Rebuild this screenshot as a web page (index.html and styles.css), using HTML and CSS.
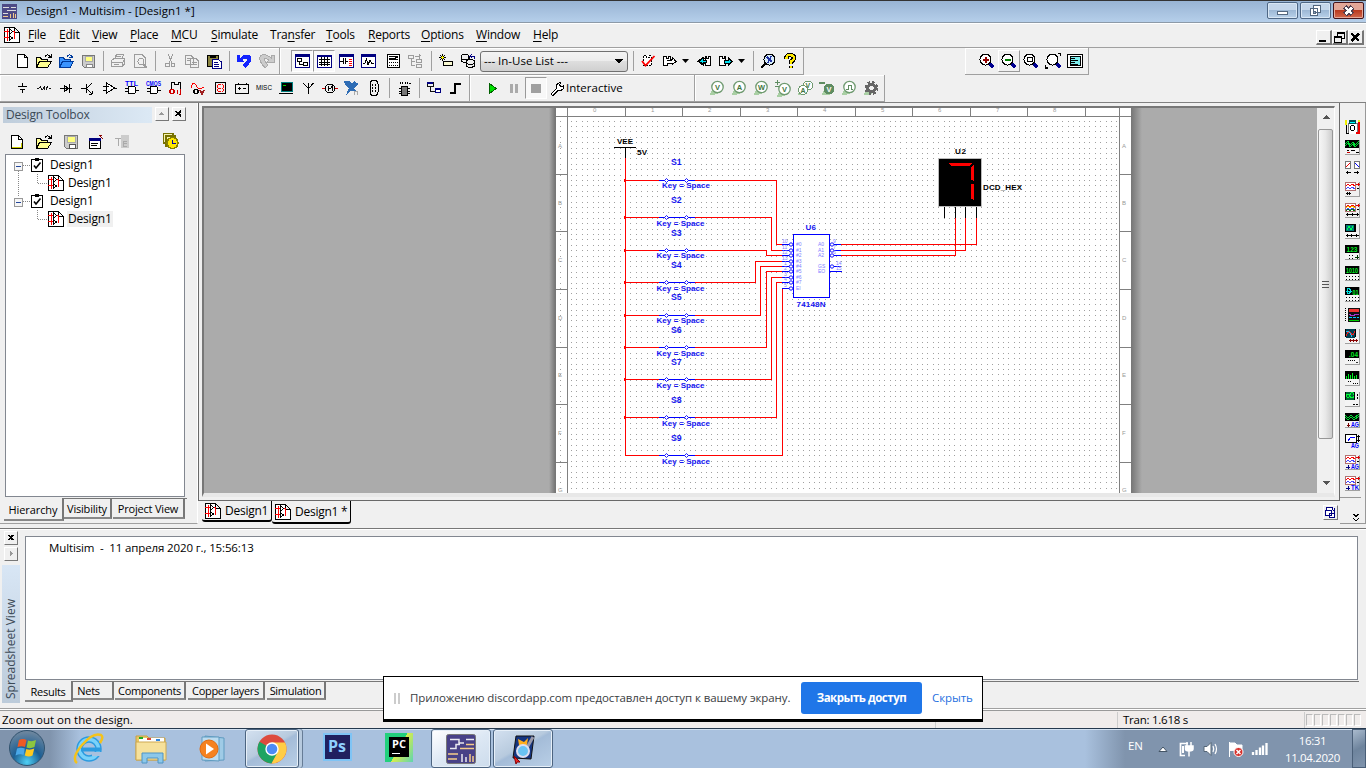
FILE: index.html
```html
<!DOCTYPE html>
<html lang="en">
<head>
<meta charset="utf-8">
<title>Design1 - Multisim - [Design1 *]</title>
<link rel="stylesheet" href="styles.css">
</head>
<body>
<svg class="defs" width="0" height="0">
  <symbol id="doc" viewBox="0 0 16 16"><path d="M.5.5H10.5L15.5 5.5V15.5H.5ZM10.500 .5V5.500H15.500" fill="#fff" stroke="#000"/><path d="M0 4.500H5M0 10.500H5M3.500 2V13.500M7 4.500H10.500V12" stroke="#f00" fill="none"/><path d="M5.500 2V7L8.500 4.500ZM5.500 8.500V13.500L8.500 11Z" fill="#fff" stroke="#000"/></symbol>
  <symbol id="open" viewBox="0 0 16 16"><path d="M.5 14.500V4.500H4.500L5.500 6.500H11.500V8.500M.5 14.500L3.500 8.500H15.500L11.500 14.500Z" stroke="#000" fill="#ffff90"/><path d="M9 3.500Q12 0 14.500 4M12 4.500H15V1" stroke="#000" fill="none"/></symbol>
  <symbol id="chk" viewBox="0 0 13 14"><path d="M.5 1.500H11.500V13.500H.5Z" fill="#fff" stroke="#000"/><path d="M4 1.500H8" stroke="#000" stroke-width="3"/><path d="M3 7.500L5 10L9.500 4.500" stroke="#000" stroke-width="1.600" fill="none" shape-rendering="auto"/></symbol>
  <symbol id="lens" viewBox="0 0 16 16"><path d="M10.500 10.500L14.500 14.500" stroke="#000090" stroke-width="3"/><circle cx="6.500" cy="6.500" r="5.500" fill="#fff" stroke="#000"/></symbol>
  <symbol id="probe" viewBox="0 0 16 16"><path d="M0 15.500L4 8L9 14Z" fill="#a9cfa4"/><circle cx="8.500" cy="7" r="5.700" fill="#fff" stroke="#6f9a70" stroke-width="1.300" shape-rendering="auto"/></symbol>
  <symbol id="wave" viewBox="0 0 15 15"><path d="M0 0H15V15H0Z" fill="#f0f0f0"/><path d="M0 14.500H14.500V0" stroke="#a0a0a0" fill="none"/><path d="M.5 8.500V.5H10.500V8.500Z" fill="#fff" stroke="#b07070"/><path d="M1 4L3 2L5 4L7 2L10 4" stroke="#f00" fill="none"/><path d="M1 7L3 5L5 7L7 5L10 7" stroke="#44f" fill="none"/><path d="M11 2.500H15M13 1V4" stroke="#e00000"/><path d="M12 6.500H14" stroke="#000"/></symbol>
  <symbol id="scr" viewBox="0 0 15 15"><path d="M0 0H15V15H0Z" fill="#f4f4f4"/><path d="M0 14.500H14.500V0" stroke="#a0a0a0" fill="none"/><path d="M0 0H14V8H0Z" fill="#000"/></symbol>
</svg>

<header class="title">
  <svg class="appicon" width="15" height="15"><path d="M0 0H15V15H0Z" fill="#4d4a86"/><path d="M1 3H7M5 6H14M1 9H6M9 3H14" stroke="#ddd" stroke-width="1"/><path d="M1 12H6M8 14V10M11 14V9M13.500 14V10" stroke="#f1c98b" stroke-width="1"/></svg>
  <span class="t-title">Design1 - Multisim - [Design1 *]</span>
  <div class="winbtns">
    <i class="wb"><svg width="30" height="16"><rect x="9.500" y="8.500" width="10" height="3" rx="1" fill="#fff" stroke="#53677f"/></svg></i>
    <i class="wb"><svg width="30" height="16"><path d="M12.500 2.500H19.500V9.500H12.500ZM9.500 5.500H16.500V12.500H9.500Z" fill="#fff" stroke="#53677f"/><path d="M12 8.500H14.500V10H12Z" fill="#9ab" stroke="#53677f"/></svg></i>
    <i class="wb close"><svg width="30" height="16"><path d="M11 4L18.500 11.500M18.500 4L11 11.500" stroke="#504050" stroke-width="5"/><path d="M11.500 4.500L18 11M18 4.500L11.500 11" stroke="#fff" stroke-width="2.500"/></svg></i>
  </div>
</header>

<nav class="menu">
  <svg width="16" height="16"><use href="#doc"/></svg>
  <span class="m1"><u>F</u>ile</span><span class="m2"><u>E</u>dit</span><span class="m3"><u>V</u>iew</span><span class="m4"><u>P</u>lace</span><span class="m5"><u>M</u>CU</span><span class="m6"><u>S</u>imulate</span><span class="m7">Tra<u>n</u>sfer</span><span class="m8"><u>T</u>ools</span><span class="m9"><u>R</u>eports</span><span class="m10"><u>O</u>ptions</span><span class="m11"><u>W</u>indow</span><span class="m12"><u>H</u>elp</span>
  <div class="mdibtns">
    <i><svg width="13" height="13"><path d="M2 10H9" stroke="#000" stroke-width="2"/></svg></i>
    <i><svg width="13" height="13"><path d="M4.500 5V1.500H11.500V7.500H9M4 2H12M1.500 5.500H8.500V11.500H1.500ZM1 6H9" stroke="#000" fill="none"/></svg></i>
    <i><svg width="13" height="13"><path d="M2.500 2.500L10 10M10 2.500L2.500 10" stroke="#000" stroke-width="2.200"/></svg></i>
  </div>
</nav>

<div class="bars">
  <div class="row">
    <div class="tb b-std">
      <b><svg class="i"><path d="M3.500 1.500H10.500L13.500 4.500V14.500H3.500ZM10.500 1.500V4.500H13.500" fill="#fff"/></svg></b>
      <b><svg class="i"><use href="#open"/></svg></b>
      <b><svg class="i"><path d="M1.500 14.500V4.500H5.500L6.500 6.500H12.500V8M1.500 14.500L4.500 8.500H15.500L12 14.500Z" stroke="#003b9c" fill="#3a94ff"/><path d="M9 3.500Q12 0 14.500 4H11" stroke="#003b9c"/></svg></b>
      <b><svg class="i"><path d="M2.500 2.500H14.500V14.500H4.500L2.500 12.500Z" fill="#ccc" stroke="#777"/><path d="M5 3H12V8H5Z" fill="#ffff80" stroke="#aaa"/><path d="M6 11H12V14H6Z" fill="#fff" stroke="#888"/></svg></b>
      <s></s>
      <b><svg class="i gr"><path d="M4.500 6L6.500 1.500H13.500L12 6M1.500 7.500L4 5.500H14.500V11L12.500 13.500H1.500ZM1.500 9.500H12.500V13M12.500 9.500L14.500 7M6 3.500H11M4 11.500H9"/></svg></b>
      <b><svg class="i gr"><path d="M2.500 1.500H10L13 4.500V14.500H2.500Z"/><circle cx="9" cy="8.500" r="3"/><path d="M11 11L15 15" stroke-width="2"/></svg></b>
      <s></s>
      <b><svg class="i gr"><path d="M6 1L10 10M11 1L7 10"/><circle cx="5.500" cy="12" r="2"/><circle cx="11" cy="12" r="2"/></svg></b>
      <b><svg class="i gr"><path d="M1.500 2.500H7L9.500 5V11.500H1.500ZM6.500 5.500H12L14.500 8V14.500H6.500ZM3 5.500H6M3 7.500H6M8 9.500H13M8 11.500H13"/></svg></b>
      <b><svg class="i"><path d="M1.500 2.500H12.500V13.500H1.500Z" fill="#8a8440"/><path d="M4 3H10" stroke-width="3"/><path d="M6.500 6.500H12L15.500 9V15.500H6.500Z" fill="#fff" stroke="#000080"/><path d="M8 9.500H12M8 11.500H13M8 13.500H13" stroke="#000080"/></svg></b>
      <s></s>
      <b><svg class="i" shape-rendering="auto"><path d="M1 2H4V5Q9 0 14 2.500Q17 6 13 11L9 15L6 12L11 7Q11 4 6 7L8 9H1Z" fill="#1424ff" stroke="none"/></svg></b>
      <b><svg class="i" shape-rendering="auto"><path d="M16 2H13V5Q8 0 3 2.500Q0 6 4 11L7 15L10 12L6 7Q6 4 11 7L9 9H16Z" fill="#ccc" stroke="#aaa"/></svg></b>
    </div>
    <div class="tb b-main">
      <b class="on"><svg class="i"><path d="M1.500 1.500H15.500V14.500H1.500Z" fill="#fff" stroke="#000080"/><path d="M1 2.500H16" stroke="#000080" stroke-width="3"/><path d="M3.500 5.500H7.500V8.500H3.500ZM5.500 9V11.500H9M9.500 9.500H13.500V12.500H9.500Z"/></svg></b>
      <b class="on"><svg class="i"><path d="M1 2H15V14H1Z" fill="#fff" stroke="#000080"/><path d="M1 2.500H15" stroke="#000080" stroke-width="2"/><path d="M5.500 4V13M8.500 4V13M11.500 4V13M3 6.500H14M3 9.500H14M3 11.500H14"/></svg></b>
      <b><svg class="i"><path d="M1 1.500H15.500V14.500H1Z" fill="#fff" stroke="#000080"/><path d="M1 2.500H15" stroke="#000080" stroke-width="2"/><path d="M2 8H5M5.500 5V11M7.500 5V11M8 8H10"/><path d="M11 6.500H14M11 8.500H14M11 10.500H14M11 12.500H14" stroke="#f00"/></svg></b>
      <b><svg class="i"><path d="M1 1.500H15.500V14.500H1Z" fill="#fff" stroke="#000080"/><path d="M1 2.500H15" stroke="#000080" stroke-width="2"/><path d="M3 10H5L6.500 6L8 12L10 7L11.500 10H14"/></svg></b>
      <b class="gap"><svg class="i"><path d="M2.500 1.500H14.500V14.500H2.500Z" fill="#fff"/><path d="M4 3.500H13M4 6.500H13M4.500 5L8.500 6L12.500 4"/><path d="M4 9.500H13M4 12.500H13" stroke-dasharray="1 1"/></svg></b>
      <b><svg class="i gr"><path d="M1.500 2.500H6.500V5.500H1.500ZM4.500 6V12.500H8M4.500 8.500H8M9.500 6.500H14.500V9.500H9.500ZM9.500 11.500H14.500V14.500H9.500ZM8 3.500H12V6M12 1.500L14.500 3.500"/></svg></b>
      <s class="gs"></s>
      <b><svg class="i"><path d="M5.500 8.500H14.500V12.500H5.500Z" fill="#f8f8d0"/><path d="M4.500 1V8M1 4.500H8M2 2L7 7M7 2L2 7"/><path d="M3 4.500H6M4.500 3V6" stroke="#ff0"/></svg></b>
      <b><svg class="i"><ellipse cx="5" cy="4" rx="4" ry="2.500" fill="#eee"/><path d="M1 4V8Q5 11 9 8V4"/><ellipse cx="10.500" cy="9" rx="4" ry="2.500" fill="#eee"/><path d="M6.500 9V13Q10 16 14.500 13V9"/><path d="M10 3.500H14.500V6M12 1L10 3.500L12 5" stroke="#000080"/></svg></b>
      <div class="combo"><span class="t-combo">--- In-Use List ---</span><svg width="9" height="5"><path d="M0 0H8L4 5Z"/></svg></div>
      <s></s>
      <b><svg class="i"><path d="M3.500 3V12.500H11V2.500H9M3.500 2.500H6V4.500H9V2" fill="#fff" stroke-dasharray="2 1"/><path d="M2 8L5.500 12.500L14.500 3" stroke="#f00" stroke-width="1.800" shape-rendering="auto"/></svg></b>
      <b><svg class="i"><path d="M1.500 3.500H4V5H6V3.500H8.500V6H10V4L14 8.500L10 12V10H5.500V12.500H1.500ZM5 7.500H10" fill="#fff"/></svg></b>
      <em></em>
      <b><svg class="i"><path d="M14 3.500H12V5H10V3.500H9V6L7 4L2 8.500L7 12V10H9V12.500H14Z" fill="#fff"/><path d="M7 5L3 8.500L7 11V9.500H10V7H7Z" fill="#00e0f0"/></svg></b>
      <b><svg class="i"><path d="M1.500 3.500H4V5H6V3.500H7.500V12.500H1.500Z" fill="#fff"/><path d="M6 7H10V4.500L14 8.500L10 12.500V10H6Z" fill="#00e0f0"/></svg></b>
      <em></em>
      <s></s>
      <b><svg class="i"><path d="M6 10L1 15" stroke-width="2"/><circle cx="9.500" cy="6.500" r="5.500" fill="#d8eefc"/><path d="M7 4L12 9M11 3L8 10" stroke="#2030a0" stroke-width="1.500"/></svg></b>
      <b><svg class="i" shape-rendering="auto"><path d="M4.500 6Q4 2 8 2Q12 2 12 5Q12 7 9 8.500V11M9 12.500V15" stroke="#000" stroke-width="4.400"/><path d="M4.500 6Q4 2 8 2Q12 2 12 5Q12 7 9 8.500V10.500M9 12.500V14.500" stroke="#ffea00" stroke-width="2.400"/></svg></b>
    </div>
    <div class="tb b-zoom">
      <b><svg class="i"><use href="#lens"/><path d="M3.500 6.500H9.500M6.500 3.500V9.500" stroke="#900000" stroke-width="2"/></svg></b>
      <b class="up"><svg class="i"><use href="#lens"/><path d="M3.500 6.500H9.500" stroke="#008000" stroke-width="2"/></svg></b>
      <b><svg class="i"><use href="#lens"/><path d="M4 4.500H9V8.500H4Z"/></svg></b>
      <b><svg class="i"><use href="#lens" x="1"/><path d="M13 .5H15.500V3M.5 12V15H3" stroke-width="1.500"/></svg></b>
      <b><svg class="i"><path d="M.5 1.500H15.500V14.500H.5Z" fill="#fff"/><path d="M3 3.500H13V12.500H3Z" fill="#7feeee"/><path d="M4 5.500H8M4 7.500H11M4 9.500H8M4 11H11"/></svg></b>
    </div>
  </div>
  <div class="row">
    <div class="tb b-comp">
      <b><svg class="i"><path d="M8.500 3V6M4 6.500H13M6 9.500H11M8.500 10V13"/></svg></b>
      <b><svg class="i" shape-rendering="auto"><path d="M1 8H3L4.500 5.500L6 10L8 5.500L9.500 10L11 5.500L12.500 8H15" stroke-width=".9"/></svg></b>
      <b><svg class="i"><path d="M2 8.500H14M6 5V12L10.500 8.500ZM11.500 4V13" /></svg></b>
      <b><svg class="i"><path d="M1 8.500H6M6.500 4V13M7 8L12 3M7 9L12 14M12 14H9M12 14V11"/></svg></b>
      <b><svg class="i"><path d="M4.500 3V13L13 8ZM1 6.500H4M1 10.500H4M13 8.500H15M5 6.500H7" fill="#fff"/></svg></b>
      <b><svg class="i"><path d="M4.500 6.500H9Q12 6.500 12 10Q12 13.500 9 13.500H4.500ZM1 8.500H4M1 11.500H4M12 10.500H15" fill="#fff"/><text x="1" y="6" class="blue" textLength="13">TTL</text></svg></b>
      <b><svg class="i"><path d="M4.500 6.500H9Q12 6.500 12 10Q12 13.500 9 13.500H4.500ZM1 8.500H4M1 11.500H4M12 10.500H15" fill="#fff"/><text x="0" y="6" class="blue" textLength="15" lengthAdjust="spacingAndGlyphs">CMOS</text></svg></b>
      <b><svg class="i"><path d="M3.500 9V2.500H6V4H10V2.500H12.500V13"/><circle cx="4" cy="11.500" r="2.200" stroke="#d00000" stroke-width="1.500"/><path d="M9 9.500V14M12.500 9V14H11" stroke="#d00000"/></svg></b>
      <b><svg class="i"><path d="M1 8Q3 0 6 5Q8 9 10 9L14 7" stroke="#f00"/><circle cx="6" cy="11.500" r="2.200" stroke-width="1.500"/><path d="M10 10L12 14L14 10" stroke="#a02020" stroke-width="1.500"/></svg></b>
      <b><svg class="i"><path d="M3.500 2.500H13.500V13.500H3.500Z"/><path d="M6 4.500H11M6 8H11M6 11.500H11M5.500 5V11M11.500 5V11" stroke="#f00" stroke-dasharray="3 1"/></svg></b>
      <b><svg class="i"><path d="M1.500 4.500H14.500V13.500H1.500ZM4 2.500V4M12 2.500V4M4 8.500H7M9 8.500H12M5.500 7V10"/></svg></b>
      <b><svg class="i"><text x="0" y="10" class="misc" textLength="16" lengthAdjust="spacingAndGlyphs">MISC</text></svg></b>
      <b><svg class="i"><path d="M3.500 2.500H14.500V11.500H3.500Z" fill="#000" stroke="#008080"/><path d="M1 13.500H15" stroke="#000"/><path d="M5 5.500H8" stroke="#0c0"/></svg></b>
      <b><svg class="i"><path d="M3 3L8.500 8.500L13.500 3M8.500 3V13.500"/></svg></b>
      <b><svg class="i"><path d="M0 8.500H3M13 8.500H16" stroke="#c00"/><circle cx="8" cy="8.500" r="4.500"/><path d="M6 11V6.500L8 9L10 6.500V11"/></svg></b>
      <b><svg class="i" shape-rendering="auto"><path d="M0 1L5 1L8 4L11 0L12 3L15 4L10 8L12 11L7 11L2 15L5 8L1 5Z" fill="#2f6db5" stroke="none"/><path d="M10 15V11H13V15" stroke="#aaa"/></svg></b>
      <b><svg class="i"><rect x="4" y=".5" width="8" height="15" rx="3.500" fill="#eee"/><path d="M6.500 4V13M9.500 4V13" stroke-dasharray="2 1"/></svg></b>
      <s></s>
      <b><svg class="i"><path d="M5.500 6.500H11.500V15.500H5.500Z" fill="#777"/><path d="M3 8.500H5M3 11.500H5M3 13.500H5M12 8.500H14M12 11.500H14M12 13.500H14M4 1.500V4M6.500 1.500V4M9 1.500V4M11.500 1.500V4M13 3.500H15"/></svg></b>
      <s></s>
      <b><svg class="i"><path d="M1.500 2.500H7V6H1.500ZM4.500 6V11.500H9" stroke="#111"/><path d="M1 3H7M9 9H15" stroke="#000080" stroke-width="2"/><path d="M9.500 9.500H14.500V12.500H9.500Z" fill="#fff" stroke="#000080"/></svg></b>
      <b><svg class="i"><path d="M2 13H7V3.500H13" stroke-width="2"/></svg></b>
    </div>
    <div class="tb b-sim">
      <b><svg class="i"><path d="M5 3L12 8.500L5 14Z" fill="#00e000" stroke="#006000"/></svg></b>
      <b><svg class="i"><path d="M5.500 4V13M10.500 4V13" stroke="#aaa" stroke-width="3"/></svg></b>
      <b class="on"><svg class="i"><path d="M3 4H13V13H3Z" fill="#a0a0a0" stroke="none"/></svg></b>
      <div class="inter"><svg class="i" viewBox="0 0 16 16" shape-rendering="auto"><path d="M3 15L2 14L7.500 8.500V5L11 2L12 3L10.500 5L12 7L14.500 5.500L15 8L12 10.500H9L4.500 15Z" fill="#fff"/></svg><span class="t-inter">Interactive</span></div>
    </div>
    <div class="tb b-probe">
      <b><svg class="i"><use href="#probe"/><text x="6" y="10">V</text></svg></b>
      <b><svg class="i"><use href="#probe"/><text x="5.700" y="10">A</text></svg></b>
      <b><svg class="i"><use href="#probe"/><text x="5" y="10" textLength="7" lengthAdjust="spacingAndGlyphs">W</text></svg></b>
      <b><svg class="i"><use href="#probe" x="1" y="2"/><path d="M0 2.500H5M2.500 0V5M0 6.500H4" stroke="#5f8d62" stroke-width="1.500"/><text x="7" y="12">V</text></svg></b>
      <b><svg class="i" shape-rendering="auto"><path d="M0 15.500L3 10L8 14Z" fill="#a9cfa4" stroke="none"/><circle cx="11" cy="5.500" r="4.500" fill="#fff" stroke="#6f9a70"/><text x="8.500" y="8" class="sm">V</text><circle cx="6" cy="10" r="4.500" fill="#fff" stroke="#6f9a70"/><text x="3.500" y="12.500" class="sm">A</text></svg></b>
      <b><svg class="i" shape-rendering="auto"><path d="M2 15.500L6 9L11 15Z" fill="#a9cfa4" stroke="none"/><circle cx="10" cy="9" r="5.500" fill="#5f8d62" stroke="none"/><path d="M0 2.500H6" stroke="#5f8d62" stroke-width="2"/><text x="7.500" y="12" class="w">V</text></svg></b>
      <b><svg class="i"><use href="#probe"/><path d="M5 9.500H7V5.500H10V9.500H12" stroke="#5f8d62"/></svg></b>
      <b><svg class="i" shape-rendering="auto"><path d="M0 15.500L4 8L9 14Z" fill="#a9cfa4" stroke="none"/><circle cx="8.500" cy="8" r="3.700" stroke="#666" stroke-width="3"/><circle cx="8.500" cy="8" r="6" stroke="#666" stroke-width="2" stroke-dasharray="2.700 2"/></svg></b>
    </div>
  </div>
</div>

<main class="work">
  <aside class="left">
    <div class="dhead"><span class="t-dt">Design Toolbox</span><i class="sb"><svg width="11" height="11"><path d="M3 7H8L5.500 4Z" fill="#999"/></svg></i><i class="sb last"><svg width="11" height="11"><path d="M2.500 3L8 8M8 3L2.500 8" stroke="#000" stroke-width="1.700"/></svg></i></div>
    <div class="dtools">
      <svg class="i"><path d="M3.500 1.500H10.500L14.500 5.500V14.500H3.500Z" fill="#fff" stroke-width="1.300"/><path d="M10.500 2V5.500H14M4 13.500H13.500V9" stroke="#cc0"/><path d="M10.500 1.500V5.500H14.500"/></svg>
      <svg class="i o"><use href="#open"/></svg>
      <svg class="i s"><path d="M1.500 1.500H14.500V14.500H3.500L1.500 12.500Z" fill="#ccc" stroke="#777"/><path d="M4 2H12V8H4Z" fill="#ffff80" stroke="#aaa"/><path d="M6 10H12V14H6Z" fill="#fff" stroke="#555"/></svg>
      <svg class="i r"><path d="M1.500 4.500H12.500V14.500H1.500Z" fill="#fff"/><path d="M1 5H13" stroke="#000080" stroke-width="3"/><path d="M3 9.500H10M3 11.500H9"/><path d="M15 5L12 2M11 1.500H14" stroke="#800"/></svg>
      <svg class="i x"><path d="M7 1H15V14H7Z" fill="#ccc" stroke="none"/><path d="M1 4.500H7M4 5V12M13 7H9V12H13M9 9.500H13" stroke="#aaa"/></svg>
      <svg class="i clk"><path d="M.5.500H10V10H.5ZM3 3H12.500V13H3Z" stroke="#777200" stroke-width="1.500" fill="#f5f0b0"/><circle cx="9.500" cy="10" r="5.500" stroke="#888000" fill="#ffe800" stroke-width="1.500"/><path d="M9.500 7V10.500H12.500" stroke="#00a" stroke-width="1.400"/></svg>
    </div>
    <div class="tree">
      <svg class="treelines" width="60" height="72"><path d="M13.500 15V41M18 9.500H25M32.500 18V27.500H43M18 45.500H25M32.500 54V63.500H43" stroke="#888" fill="none" stroke-dasharray="1 1"/><path d="M9.500 6.500H17.500V14.500H9.500ZM9.500 42.500H17.500V50.500H9.500Z" fill="#f6f6f6" stroke="#999"/><path d="M11 10.500H16M11 46.500H16" stroke="#24479b"/></svg>
      <div class="n0"><svg width="13" height="14"><use href="#chk"/></svg><span>Design1</span></div>
      <div class="n1"><svg width="16" height="16"><use href="#doc"/></svg><span>Design1</span></div>
      <div class="n0"><svg width="13" height="14"><use href="#chk"/></svg><span>Design1</span></div>
      <div class="n1 sel"><svg width="16" height="16"><use href="#doc"/></svg><span>Design1</span></div>
    </div>
    <div class="ltabs"><span class="act w1">Hierarchy</span><span class="w2">Visibility</span><span class="w3">Project View</span></div>
  </aside>

  <section class="mdi">
    <div class="frame"><div class="view">
      <div class="canvas">
        <svg class="sheet" width="575" height="385" viewBox="556 108 575 385">
          <defs><pattern id="dots" x="625" y="180" width="27" height="27" patternUnits="userSpaceOnUse"><path d="M0 .5H27M0 5.500H27M0 11.500H27M0 16.500H27M0 22.500H27" stroke="#a0a0a0" stroke-dasharray="1 4 1 5 1 4 1 5 1 4"/></pattern>
          <g id="sw"><path d="M659 .5H695" stroke="#00f"/><path d="M666.500 -1.500L668.500 .5L666.500 2.500L664.500 .5ZM686.500 -1.500L688.500 .5L686.500 2.500L684.500 .5Z" class="dia"/><path d="M624 -1H626V2H624Z" fill="#f00"/></g>
          <g id="pl"><path d="M782 .5H789" stroke="#00f"/><circle cx="791" cy=".5" r="1.700" class="dia"/></g>
          <g id="pr"><path d="M834 .5H841" stroke="#00f"/><circle cx="832" cy=".5" r="1.700" class="dia"/></g></defs>
          <path d="M556 108H1131V493H556Z" fill="#fff"/>
          <path d="M570 119H1119V493H570Z" fill="url(#dots)"/><path d="M568 111H1119V113H568ZM559 120H562V493H559Z" fill="url(#dots)"/>
          <path d="M567.500 108V493M556 116.500H1131M1119.500 108V493M625.500 108V116M682.500 108V116M740.500 108V116M797.500 108V116M855.500 108V116M912.500 108V116M970.500 108V116M1027.500 108V116M1085.500 108V116M556 174.500H567M556 231.500H567M556 289.500H567M556 347.500H567M556 404.500H567M556 462.500H567M1120 174.500H1131M1120 231.500H1131M1120 289.500H1131M1120 347.500H1131M1120 404.500H1131M1120 462.500H1131" stroke="#808080" fill="none"/>
          <g class="rul"><text x="593" y="112">0</text><text x="651" y="112">1</text><text x="708" y="112">2</text><text x="766" y="112">3</text><text x="823" y="112">4</text><text x="881" y="112">5</text><text x="938" y="112">6</text><text x="996" y="112">7</text><text x="1053" y="112">8</text>
          <text x="558" y="148">A</text><text x="558" y="205">B</text><text x="558" y="262">C</text><text x="558" y="320">D</text><text x="558" y="377">E</text><text x="558" y="435">F</text><text x="558" y="492">G</text><text x="1122" y="148">A</text><text x="1122" y="205">B</text><text x="1122" y="262">C</text><text x="1122" y="320">D</text><text x="1122" y="377">E</text><text x="1122" y="435">F</text><text x="1122" y="492">G</text></g>
          <path d="M625.500 158V455.500H782.500V288.500M625 180.500H776.500V244.500H783M625 217.500H771.500V250.500H783M625 250.500H766.500V255.500H783M625 282.500H755.500V261.500H783M625 315.500H760.500V266.500H783M625 347.500H766.500V271.500H783M625 379.500H771.500V277.500H783M625 417.500H776.500V282.500H783M841 244.500H976.500V218M841 250.500H965.500V218M841 255.500H955.500V218" stroke="#f00" fill="none"/>
          <path d="M614 147.500H636M625.500 147V158M944.500 206V218M955.500 206V218M965.500 206V218M976.500 206V218" stroke="#000"/>
          <use href="#sw" y="180"/><use href="#sw" y="217"/><use href="#sw" y="250"/><use href="#sw" y="282"/><use href="#sw" y="315"/><use href="#sw" y="347"/><use href="#sw" y="379"/><use href="#sw" y="417"/><path d="M659 455.500H695" stroke="#00f"/><path d="M666.500 453.500L668.500 455.500L666.500 457.500L664.500 455.500ZM686.500 453.500L688.500 455.500L686.500 457.500L684.500 455.500Z" class="dia"/>
          <path d="M793.500 234.500H829.500V297.500H793.500Z" fill="#fff" stroke="#00f"/><path d="M830 271.500H842" stroke="#00f"/>
          <use href="#pl" y="244"/><use href="#pl" y="250"/><use href="#pl" y="255"/><use href="#pl" y="261"/><use href="#pl" y="266"/><use href="#pl" y="271"/><use href="#pl" y="277"/><use href="#pl" y="282"/><use href="#pl" y="288"/>
          <use href="#pr" y="244"/><use href="#pr" y="250"/><use href="#pr" y="255"/><use href="#pr" y="266"/>
          <g class="pins"><text x="796" y="246">#0</text><text x="796" y="252">#1</text><text x="796" y="257">#2</text><text x="796" y="263">#3</text><text x="796" y="268">#4</text><text x="796" y="273">#5</text><text x="796" y="279">#6</text><text x="796" y="284">#7</text><text x="796" y="290">EI</text><text x="818" y="246">A0</text><text x="818" y="252">A1</text><text x="818" y="257">A2</text><text x="818" y="268">GS</text><text x="818" y="273">EO</text>
          <text x="782" y="243">10</text><text x="782" y="249">11</text><text x="782" y="254">12</text><text x="782" y="260">13</text><text x="784" y="265">1</text><text x="784" y="270">2</text><text x="784" y="276">3</text><text x="784" y="281">4</text><text x="784" y="287">5</text><text x="833" y="243">9</text><text x="833" y="249">7</text><text x="833" y="254">6</text><text x="836" y="265">14</text><text x="836" y="270">15</text></g>
          <g class="lb bl sn"><text x="671" y="165">S1</text><text x="671" y="203">S2</text><text x="671" y="236">S3</text><text x="671" y="268">S4</text><text x="671" y="300">S5</text><text x="671" y="333">S6</text><text x="671" y="365">S7</text><text x="671" y="403">S8</text><text x="671" y="441">S9</text></g>
          <g class="lb bl"><text x="662" y="188" textLength="48">Key = Space</text><text x="656.500" y="226" textLength="48">Key = Space</text><text x="656.500" y="258" textLength="48">Key = Space</text><text x="656.500" y="291" textLength="48">Key = Space</text><text x="656.500" y="323" textLength="48">Key = Space</text><text x="656.500" y="356" textLength="48">Key = Space</text><text x="656.500" y="388" textLength="48">Key = Space</text><text x="662" y="426" textLength="48">Key = Space</text><text x="662" y="464" textLength="48">Key = Space</text>
          <text x="805.500" y="230" textLength="10.500">U6</text><text x="796.500" y="307" textLength="29">74148N</text></g>
          <g class="lb"><text x="617" y="144" textLength="16">VEE</text><text x="637" y="155" textLength="10">5V</text><text x="955" y="154" textLength="11">U2</text><text x="983" y="190" textLength="39">DCD_HEX</text></g>
          <path d="M938.500 158.500H981.500V206.500H938.500Z" fill="#000" stroke="#bbb"/>
          <path d="M949 163H972L970 166H951ZM974 165V181L971 180V167ZM974 184V200L971 199V184Z" fill="#f00"/>
        </svg>
      </div>
      <div class="vsb"><svg width="16" height="20"><path d="M5 11H12L8.500 7Z" fill="#555"/></svg><div class="thumb"><i></i><i></i><i></i></div><svg class="dn" width="16" height="20"><path d="M5 10H12L8.500 14Z" fill="#555"/></svg></div>
    </div></div>
    <div class="mtabs"><span class="mt1"><svg width="16" height="16"><use href="#doc"/></svg>Design1</span><span class="mt2"><svg width="16" height="16"><use href="#doc"/></svg>Design1 *</span><i class="casc"><svg width="13" height="13"><path d="M2.500 4V1.500H8.500V4M1.500 4.500H7.500V9.500H1.500ZM5.500 7.500H10.500V11.500H5.500Z" fill="#fff" stroke="#000080"/><path d="M9 4.500H11M10.500 2V7" stroke="#000080"/></svg></i></div>
  </section>

  <aside class="inst">
    <svg width="15" height="15"><path d="M3 4H12V15H3Z" fill="#fff" stroke="#777"/><path d="M4 1H11V5H4Z" fill="#005050"/><path d="M5 3.500H10" stroke="#0ff"/><path d="M.8 1V6M14 1V3" stroke="#ee0" stroke-width="2"/><path d="M14 3V14H11" stroke="#e00" stroke-width="1.500" fill="none"/><path d="M1.500 6V14H4" stroke="#000" fill="none"/><circle cx="7.500" cy="9" r="2.500" fill="none" stroke="#000"/></svg>
    <svg width="15" height="15"><use href="#scr"/><path d="M0 4L3 1L5 5L8 2L10 5L14 1M0 6L3 3L5 7L8 4L10 7L14 3" stroke="#0d3" fill="none"/><path d="M2 10.500H4M5.500 10.500H10M11 12.500H14" stroke="#000"/><path d="M2 12.500H5" stroke="#c00"/></svg>
    <svg width="15" height="15"><path d="M.5.500H5.500V7.500H.5ZM9 .5H14V7.500H9Z" fill="#fff" stroke="#777"/><path d="M1 6L5 2" stroke="#e00"/><path d="M10 2L14 6" stroke="#00f"/><path d="M1 11.500H6M9 11.500H14M2.500 10V13M12.500 10V13" stroke="#000"/></svg>
    <svg width="15" height="15"><use href="#wave"/><path d="M1 11.500H6M2.500 10V13M4.500 10V13" stroke="#000"/></svg>
    <svg width="15" height="15"><use href="#wave"/><path d="M1 5L3 3L5 5L7 3L10 5" stroke="#ec0" fill="none"/><path d="M1 8L3 6L5 8L7 6L10 8" stroke="#070" fill="none"/><path d="M1 11.500H14M2.500 10V13M7.500 10V13M12.500 10V13" stroke="#000"/></svg>
    <svg width="15" height="15"><use href="#scr"/><path d="M1 1H9V7H1Z" fill="#077"/><path d="M2 6L4 2L6 6L8 2" stroke="#0f5" fill="none"/><path d="M11 0H14V8H11Z" fill="#eee"/><path d="M1 11.500H14M2.500 10V13M6.500 10V13M11.500 10V13" stroke="#000"/></svg>
    <svg width="15" height="15"><use href="#scr"/><text x="1.500" y="7" class="seg" textLength="11" lengthAdjust="spacingAndGlyphs">123</text><path d="M4 10.500H8M4 13.500H8" stroke="#000" stroke-dasharray="1 2"/><path d="M10 12H14M12 10V14" stroke="#030"/></svg>
    <svg width="15" height="15"><use href="#scr"/><text x="1" y="7" class="seg" textLength="12" lengthAdjust="spacingAndGlyphs">1010</text><path d="M1 10.500H14M1 13.500H14" stroke="#000" stroke-dasharray="1 2"/></svg>
    <svg width="15" height="15"><use href="#scr"/><path d="M1 4H7M2 1.500H4Q7 4 4 6.500H2Z" stroke="#0dd" fill="none"/><text x="7.500" y="8" class="seg" textLength="6" lengthAdjust="spacingAndGlyphs">01</text><path d="M1 10.500H14M1 13.500H14" stroke="#000" stroke-dasharray="1 2"/></svg>
    <svg width="15" height="15"><path d="M3 0H15V14H3Z" fill="#111"/><path d="M4 2.500H14" stroke="#e33" stroke-width="3"/><path d="M4 6L6 7.500H9L11 6H14" stroke="#a3c" fill="none"/><path d="M4 9.500H14" stroke="#0cf" stroke-dasharray="3 1"/><path d="M4 12H14" stroke="#0c0"/><path d="M.5 0V14" stroke="#000" stroke-dasharray="1 1"/></svg>
    <svg width="15" height="15"><use href="#scr"/><path d="M1 0H10V9H1Z" fill="#023f50"/><path d="M1 7Q4 0 6 4T10 2" stroke="#e22" fill="none"/><path d="M1 2Q5 2 7 8" stroke="#2be" fill="none"/><path d="M11 0H14V8H11Z" fill="#eee"/><path d="M4 11.500H13M5.500 10V13M8.500 10V13M11.500 10V13" stroke="#800"/></svg>
    <svg width="15" height="15"><use href="#scr"/><text x="4" y="7" class="seg" textLength="9" lengthAdjust="spacingAndGlyphs">.04</text><path d="M3 10.500H10" stroke="#000" stroke-dasharray="1 1"/><circle cx="12" cy="12.500" r="1" fill="#333"/></svg>
    <svg width="15" height="15"><use href="#scr"/><path d="M1.500 8V5M3.500 8V3M5.500 8V4M7.500 8V2M9.500 8V5M11.500 8V4" stroke="#0e2"/><path d="M3 10.500H7M8 12.500H14" stroke="#000" stroke-dasharray="1 1"/></svg>
    <svg width="15" height="15"><use href="#scr"/><path d="M1 0H9V8H1Z" fill="#063"/><path d="M1 4Q3 0 5 4T9 4M1 3Q3 8 5 3T9 3" stroke="#0f3" fill="none"/><path d="M10 0H14V8H10Z" fill="#eee"/><path d="M12 2V7M8 12.500H14" stroke="#000" stroke-dasharray="2 1"/></svg>
    <svg width="15" height="15"><use href="#scr"/><path d="M0 2L3 5L6 2L9 5L14 1M0 4L3 7L6 4L9 7L14 3" stroke="#0d3" fill="none"/><path d="M2 12H5M3.500 10V14" stroke="#700"/><text x="6" y="14" class="ag" textLength="8" lengthAdjust="spacingAndGlyphs">AG</text></svg>
    <svg width="15" height="15"><path d="M.5.500H11V8H.5Z" fill="#fff" stroke="#000"/><path d="M3 7L6 3H10" stroke="#00f" fill="none"/><path d="M12 2.500H15M12 6.500H15M13.500 1V8" stroke="#000"/><text x="6" y="14" class="ag" textLength="8" lengthAdjust="spacingAndGlyphs">AG</text></svg>
    <svg width="15" height="15"><use href="#wave"/><path d="M1 12H5M3.500 10V14" stroke="#000080"/><text x="6" y="14" class="ag" textLength="8" lengthAdjust="spacingAndGlyphs">AG</text></svg>
    <svg width="15" height="15"><use href="#wave"/><path d="M1 12H5M3.500 10V14" stroke="#000080"/><text x="6" y="14" class="ag" textLength="8" lengthAdjust="spacingAndGlyphs">TK</text></svg>
    <hr>
    <svg class="chev" width="8" height="9"><path d="M1.500 0L4 2.500L6.500 0M1.500 4.500L4 7L6.500 4.500" fill="none" stroke="#000" stroke-width="1.300"/></svg>
  </aside>
</main>

<section class="bottom">
  <div class="side">
    <i class="sb"><svg width="11" height="11"><path d="M3.500 3L8 8M8 3L3.500 8" stroke="#000" stroke-width="1.700"/></svg></i>
    <i class="sb"><svg width="11" height="11"><path d="M5 3V8L8 5.500Z" fill="#999"/></svg></i>
    <div class="vlabel"><span>Spreadsheet View</span></div>
  </div>
  <div class="log">
    <div class="logbox"><span class="t-log">Multisim&nbsp; -&nbsp; 11 апреля 2020 г., 15:56:13</span></div>
    <div class="btabs"><span class="act k1">Results</span><span class="k2">Nets</span><span class="k3">Components</span><span class="k4">Copper layers</span><span class="k5">Simulation</span></div>
  </div>
</section>

<footer class="status"><span class="st1">Zoom out on the design.</span><span class="st2"></span><span class="st3">Tran: 1.618 s</span><div class="prog"><i></i><i></i><i></i><i></i><i></i><i></i><i></i></div></footer>

<div class="task">
  <div class="start"><svg width="38" height="38"><defs><radialGradient id="orb" cx=".5" cy=".9" r=".9"><stop offset="0" stop-color="#4fd0f5"/><stop offset=".45" stop-color="#1c5f94"/><stop offset="1" stop-color="#73899f"/></radialGradient></defs><circle cx="19" cy="19" r="17.500" fill="url(#orb)" stroke="#31536f"/><path d="M11 11Q15 9 18.500 11L17 18Q13.500 16.500 9.500 18Z" fill="#ee5a24"/><path d="M20 11.500Q24 13 28 11L26.500 18Q22.500 20 18.500 18.500Z" fill="#8cc63f"/><path d="M9 19.500Q13 18 16.800 19.500L15.500 26Q12 24.500 7.500 26.500Z" fill="#4aa8e8"/><path d="M18.300 20Q22 21.500 26.300 19.500L24.500 26.500Q21 28.500 16.800 26.500Z" fill="#ffc91e"/></svg></div>
  <div class="ti p1"><svg width="32" height="34"><circle cx="16" cy="17" r="9.500" fill="none" stroke="#2c9be0" stroke-width="6.500"/><circle cx="16" cy="17" r="9.500" fill="none" stroke="#79d2fa" stroke-width="3.500"/><path d="M8 17.500H28" stroke="#2c9be0" stroke-width="4"/><path d="M19 20H30V24H19Z" fill="#a9c1de"/><path d="M4 31Q-2 26 9 13T28 3Q31 5 27 11" fill="none" stroke="#f4c21a" stroke-width="2.500"/></svg></div>
  <div class="ti p2"><svg width="34" height="32"><path d="M2 3H13L15 5H31V27H2Z" fill="#e9c763" stroke="#c6a049"/><path d="M5 5H30V10H5Z" fill="#fff"/><path d="M5 5H9" stroke="#2a2" stroke-width="2"/><path d="M13 6H17" stroke="#d43" stroke-width="2"/><path d="M22 7H26" stroke="#38d" stroke-width="2"/><path d="M2 9H32V27H2Z" fill="#f6e19b" stroke="#cda953"/><path d="M8 30V20H29V30H24V25H13V30Z" fill="#8cc8ea" stroke="#4e94c4"/></svg></div>
  <div class="ti p3"><svg width="30" height="30"><path d="M8 2L27 4V26L8 27Z" fill="#9fcbe6" stroke="#5f9bc0"/><path d="M5 3L22 3V27L5 26Z" fill="#bcdcf0" stroke="#5f9bc0"/><circle cx="12" cy="15" r="9" fill="#f58220" stroke="#e06b10"/><path d="M9 9.500L17 15L9 20.500Z" fill="#fff"/></svg></div>
  <div class="tbtn dbl p4"><svg width="30" height="30"><circle cx="15" cy="15" r="14.500" fill="#dd4b3e"/><path d="M15 15L2.500 7.700A14.500 14.500 0 0 0 14.500 29.500L21.500 18Z" fill="#1da462"/><path d="M15 8.500H28A14.500 14.500 0 0 1 14.500 29.500L20.600 18.200Z" fill="#ffcd46"/><circle cx="15" cy="15" r="6.700" fill="#fff"/><circle cx="15" cy="15" r="5.300" fill="#4c8bf5"/></svg></div>
  <div class="ti p5"><div class="ps">Ps</div></div>
  <div class="ti p6"><div class="pc"><span>PC</span></div></div>
  <div class="tbtn hot p7"><svg width="30" height="30"><rect x=".5" y=".5" width="29" height="29" rx="2" fill="#484187" stroke="#777"/><path d="M4 5.500H13V9H18M20 5.500H28M4 14.500H10V10.500H14M16 20V28M20 23V28" fill="none" stroke="#e8e8f0" stroke-width="1.500"/><path d="M20 10.500H28M14 14.500H28M2 20H12M2 25H11M24 28V20M27 28V22" stroke="#f5cc8a" stroke-width="1.500"/></svg></div>
  <div class="tbtn p8"><svg width="30" height="30"><path d="M8 2H26L23 25L5 24Z" fill="#16357f" stroke="#111"/><path d="M10 5L16 8L20 4L19 11H11Z" fill="#ffae1c"/><path d="M25 3L16 19" stroke="#99a" stroke-width="3"/><circle cx="15" cy="17" r="6" fill="#69c3f3" stroke="#dde" stroke-width="2"/><path d="M6 22L12 28L9 28L8 30Z" fill="#e22" stroke="#800"/></svg></div>
  <div class="tray">
    <span class="en">EN</span>
    <svg class="y1" width="10" height="6"><path d="M1 5.500L5 1L9 5.500Z" fill="#fff" stroke="#456"/></svg>
    <svg class="y2" width="16" height="16"><path d="M9 2.500H1.500V14.500H6" stroke="#fff" stroke-width="1.700" fill="none"/><path d="M4 5V12" stroke="#fff" stroke-width="2"/><path d="M8 1V5M12 1V5M6.500 5H14V8Q14 10 10 10Q6.500 10 6.500 8ZM10 10V15.500" stroke="#fff" stroke-width="1.500" fill="#fff"/></svg>
    <svg class="y3" width="16" height="16"><path d="M1 5.500H4L8 1.500V14.500L4 10.500H1Z" fill="#fff" stroke="#567"/><path d="M10 5Q11.500 8 10 11M12 3Q15 8 12 13" fill="none" stroke="#fff" stroke-width="1.200"/></svg>
    <svg class="y4" width="18" height="16"><path d="M2.500 1V16M3 2H8L10 4H15V9L3 9.500Z" fill="#fff" stroke="#fff"/><circle cx="11.500" cy="11" r="4.500" fill="#d62f2a" stroke="#fff"/><path d="M9.500 9L13.500 13M13.500 9L9.500 13" stroke="#fff" stroke-width="1.500"/></svg>
    <svg class="y5" width="17" height="14"><path d="M2 13V10M5.500 13V8M9 13V5.500M12 13V3.500M15.500 13V1" stroke="#fff" stroke-width="2.300"/></svg>
    <div class="clock"><span>16:31</span><span>11.04.2020</span></div>
    <div class="peek"></div>
  </div>
</div>

<div class="share"><i class="grip"></i><span class="t-share">Приложению discordapp.com предоставлен доступ к вашему экрану.</span><span class="stop"><span>Закрыть доступ</span></span><span class="hide">Скрыть</span></div>
</body>
</html>
```

FILE: styles.css
```css
*{box-sizing:border-box}
body{margin:0;width:1366px;height:768px;overflow:hidden;display:flex;flex-direction:column;background:#f0f0f0;font:11.5px/16px "Open Sans","Noto Sans",sans-serif;color:#000;position:relative;white-space:nowrap}
svg{display:block;flex:none;shape-rendering:crispEdges}
i,b,s,em{font-style:normal;font-weight:400;text-decoration:none}
.defs{position:absolute}

.title{height:24px;flex:none;display:flex;border-top:1px solid #333;border-bottom:1px solid #fff;background:linear-gradient(#98b4d4,#b7d0eb);box-shadow:inset 0 -1px #8d9aa8;padding-left:2px}
.appicon{margin-top:3px}
.t-title{margin:2px 0 0 9px}
.winbtns{margin-left:auto;display:flex;gap:2px;padding:1px 2px 0 0}
.wb{width:31px;height:17px;border:1px solid #4e6785;border-radius:2px;background:linear-gradient(#c4d6ea 45%,#9db8d5 50%,#b9d2ea);box-shadow:inset 0 0 0 1px #d8e6f4}
.close{background:linear-gradient(#e2a697 45%,#b93a20 50%,#d2694e);border-color:#43141c;box-shadow:inset 0 0 0 1px #e5a99a}

.menu{height:24px;flex:none;display:flex;align-items:flex-start;border-bottom:1px solid #a0a0a0;padding:3px 0 0 4px;font-size:12px}
.menu span{height:16px;letter-spacing:-.22px}
.menu u{text-underline-offset:2px;text-decoration-thickness:1px}
.m1{width:31px;margin-left:8px}.m2{width:33px}.m3{width:38px}.m4{width:41px}.m5{width:40px}.m6{width:59px}.m7{width:56px}.m8{width:42px}.m9{width:53px}.m10{width:55px}.m11{width:57px}
.mdibtns{margin-left:auto;display:flex;padding:3px 2px 0 0}
.mdibtns i{width:16px;height:15px;border:1px solid #fff;border-right:2px solid #777;border-bottom:2px solid #777}

.bars{height:55px;flex:none;border-bottom:1px solid #808080}
.row{display:flex;height:27px}
.tb{display:flex;align-items:center;height:27px;border-right:1px solid #a0a0a0;border-bottom:1px solid #a0a0a0;padding-left:11px;box-shadow:inset 1px 1px #fff}
.b-std{width:280px}.b-main{width:524px}.b-zoom{width:124px;margin-left:161px}
.b-comp{width:470px}.b-sim{width:225px}.b-probe{width:190px}
.tb b{width:22px;height:22px;display:grid;place-items:center;flex:none}
.tb s{width:8px;height:20px;flex:none;background:linear-gradient(#a0a0a0,#a0a0a0) 4px 0/1px 20px no-repeat}
.tb em{width:12px;height:4px;flex:none;background:#000;clip-path:polygon(1px 0,8px 0,4.500px 4px)}
.tb b.on{background:#f8f8f8;border:1px solid #999;border-right-color:#fff;border-bottom-color:#fff}
.tb b.up{border:1px solid #fff;border-right-color:#999;border-bottom-color:#999}
.tb b.gap{margin-left:3px}
.tb s.gs{margin-left:1px}
.i{width:16px;height:16px;fill:none;stroke:#000;overflow:visible}
.i use{stroke:none}
.i text{stroke:none;font:bold 7.500px "Liberation Sans",sans-serif;fill:#3e7440}
.i .w{fill:#fff}
.i .sm{font-size:7px}
.i .blue{fill:#00f;font-size:7px}
.i .misc{fill:#000;font-size:7px;font-weight:400}
.gr{stroke:#9c9c9c}
.combo{width:148px;height:21px;margin:0 1px;border:1px solid #707070;border-radius:3px;background:linear-gradient(#f3f3f3,#ececec 48%,#dedede 50%,#d0d0d0);display:flex;align-items:center;justify-content:space-between;padding:0 3px;flex:none}
.inter{display:flex;align-items:center;height:22px;gap:1px;padding-left:2px}

.work{height:425px;flex:none;display:flex}
.left{width:198px;flex:none;border-bottom:1px solid #a0a0a0;height:421px;padding:4px 11px 0 3px;border-right:1px solid #fff}
.dhead{height:16px;display:flex;gap:2px}
.t-dt{width:152px;background:linear-gradient(90deg,#bfcddb,#dce9f5);color:#3c4a57;font-size:12px;line-height:15px;padding-left:3px;letter-spacing:-.18px;margin-right:1px}
.sb{width:14px;height:14px;border:1px solid #fff;border-right-color:#777;border-bottom-color:#777;flex:none}
.sb.last{margin-left:1px}
.dtools{display:flex;height:31px;padding:11px 0 0 5px}
.dtools .o{margin-left:12px}.dtools .s{margin-left:11px}.dtools .r{margin-left:9px}.dtools .x{margin-left:10px}.dtools .clk{margin:-1px 0 0 33px}
.tree{width:180px;height:343px;margin-left:2px;border:1px solid #828790;background:#fff;position:relative;padding-top:1px;font-size:12px;letter-spacing:-.18px}
.treelines{position:absolute;left:-1px;top:1px}
.n0,.n1{height:18px;display:flex;align-items:center;position:relative}
.n0{padding-left:25px;gap:5px}.n1{padding-left:42px;gap:3px}
.n1 span,.n0 span{padding:0 1px;line-height:16px}
.sel span{background:#f0f0f0}
.ltabs{display:flex;margin:1px 0 0 1px;width:183px;border-top:1px solid #777;font-size:11px}
.ltabs span,.btabs span{height:18px;border-right:2px solid #777;border-bottom:2px solid #888;line-height:17px;text-align:center;letter-spacing:-.25px}
.ltabs span{height:20px;line-height:19px;letter-spacing:-.2px}
.ltabs .act,.btabs .act{height:21px;margin-top:-1px;background:#f0f0f0;line-height:21px}
.ltabs .act{height:23px;line-height:24px;letter-spacing:-.1px}
.w1{width:60px}.w2{width:48px;margin-right:1px}.w3{width:72px}

.mdi{width:1142px;flex:none;display:flex;flex-direction:column}
.frame{height:398px;border:1px solid #696969;border-top:0;padding:3px 4px 4px 3px}
.view{height:391px;border:2px solid #777;border-right:1px solid #fff;border-bottom:4px solid #e8e8e8;display:flex;background:#ababab}
.canvas{width:1113px;height:385px;padding-left:352px;flex:none;background:linear-gradient(90deg,transparent 345px,#777 351px,#777 927px,#7a7a7a 928px,transparent 938px)}
.dia{fill:#fff;stroke:#00f;stroke-width:.9;shape-rendering:geometricPrecision}
.sheet .lb{font:bold 8px "Liberation Sans",sans-serif;fill:#000}
.sheet .bl{fill:#1414f0}
.sheet .sn{font-size:8.800px}
.pins{font:5px "Liberation Sans",sans-serif;fill:#8080ff}
.rul{font:6px "Liberation Sans",sans-serif;fill:#999}
.vsb{width:17px;height:385px;background:#f0f0f0;flex:none;display:flex;flex-direction:column;padding-left:1px}
.vsb .dn{margin-top:auto;height:22px}
.thumb{height:310px;margin-top:1px;width:15px;border:1px solid #979797;border-radius:2px;background:linear-gradient(90deg,#f6f6f6,#e8e8e8 50%,#cdcdcd);display:flex;flex-direction:column;align-items:center;justify-content:center;gap:2px;flex:none}
.thumb i{width:7px;height:1px;background:#555}
.mtabs{height:24px;display:flex;padding-left:4px;font-size:12px;letter-spacing:-.25px}
.mtabs span{display:flex;gap:4px;align-items:center;border-right:1px solid #000;border-bottom:2px solid #000;border-radius:0 0 3px 3px;padding-left:3px}
.mt1{width:70px;height:21px}.mt2{width:79px;height:23px}
.casc{margin:4px 2px 0 auto;width:15px;height:15px;border:1px solid #fff;border-right-color:#777;border-bottom-color:#777}
.inst{width:26px;height:421px;padding:16px 0 0 5px;display:flex;flex-direction:column;gap:6px;border-right:1px solid #999;border-bottom:1px solid #999}
.inst hr{margin:0 0 0 -5px;width:21px;border:0;border-top:1px solid #999;height:1px}
.inst .chev{margin:10px 0 0 7px}
.seg{font:bold 7.500px "Liberation Sans",sans-serif;fill:#0e2}
.ag{font:bold 7px "Liberation Sans",sans-serif;fill:#00f}

.bottom{height:180px;flex:none;border-top:1px solid #777;box-shadow:inset 0 1px #fff;display:flex}
.side{width:25px;flex:none;padding:2px 0 0 4px;display:flex;flex-direction:column;gap:2px}
.vlabel{margin:2px 0 0 -2px;width:18px;height:138px;background:linear-gradient(#d8e6f5,#bccbda);display:flex;align-items:flex-end;justify-content:center}
.vlabel span{writing-mode:vertical-rl;transform:rotate(180deg);line-height:18px;font-size:12px;color:#3c4a57;margin-bottom:4px;letter-spacing:.02px}
.log{padding-top:7px}
.logbox{width:1333px;height:144px;border:1px solid #828790;background:#fff;padding:3px 0 0 23px}
.t-log{letter-spacing:-.13px}
.btabs{display:flex;margin-top:1px;width:1334px;border-top:1px solid #777;font-size:11px}
.k1{width:48px}.k2{width:41px;margin-right:2px;padding-right:8px}.k3{width:71px;margin-right:2px;margin-left:-1px}.btabs .k3,.btabs .k4,.btabs .k5{letter-spacing:-.3px}.k4{width:77px;margin-right:2px}.k5{width:59px}

.status{height:20px;flex:none;background:#f0eceb;border-top:1px solid #a0a0a0;box-shadow:inset 0 1px #fff,inset 0 2px #999;display:flex;padding-top:3px}
.st1{width:935px;padding-left:2px}.st2{width:183px;border-left:1px solid #ccc;border-right:1px solid #ccc}.st3{width:187px;padding-left:5px;border-right:1px solid #ccc;letter-spacing:-.25px}
.prog{display:flex;gap:1px;padding:2px 0 0 1px}.prog i{width:7px;height:12px;border:1px solid #bbb;border-right-color:#fff;border-bottom-color:#fff}

.task{height:40px;flex:none;border-top:1px solid #25384d;box-shadow:inset 0 1px #d3e2f2;background:linear-gradient(90deg,#8094ad 50px,#a9c1de 80px,#a9c1de 1085px,#8094ad 1125px);display:flex}
.task svg{shape-rendering:auto}
.start{padding:0 0 0 8px;width:58px}
.ti{width:62px;display:grid;place-items:center;flex:none}
.p3{width:60px}
.p4{margin-left:3px}
.tbtn{width:59px;height:39px;border:1px solid #4c6480;border-radius:3px;background:linear-gradient(150deg,#d4e1f0,#b7cade 45%,#a4bcd8 50%,#b9cfe6);box-shadow:inset 0 0 0 1px #e6eff8;display:grid;place-items:center;flex:none}
.dbl{width:54px;margin-right:7px;box-shadow:inset 0 0 0 1px #e6eff8,3px 0 #b7cade,4px 0 #667c96}
.hot{background:linear-gradient(150deg,#fff,#dde8f4 50%,#cddcec)}
.p7{margin:0 2px 0 1px;width:60px}
.p8{width:60px}
.ps{width:29px;height:28px;margin-top:-4px;border:2px solid #7fc4f5;background:#20205f;color:#8fd0ff;font:bold 16px/22px "Open Sans",sans-serif;text-align:center}
.pc{width:28px;height:29px;margin-top:-2px;background:linear-gradient(120deg,#22d07c 50%,#d9ee4a 51%,#5fd5b0);padding:4px}
.pc span{display:block;width:20px;height:20px;background:linear-gradient(#fff,#fff) 3px 16px/8px 1px no-repeat #000;color:#fff;font:bold 11px/13px "Open Sans",sans-serif;text-align:center}
.tray{margin-left:auto;display:flex;color:#fff;width:238px;flex:none}
.en{margin-top:9px;width:30px;letter-spacing:-.1px}
.y1{margin-top:17px}.y2{margin:12px 0 0 11px}.y3{margin:12px 0 0 8px}.y4{margin:12px 0 0 8px}.y5{margin:13px 0 0 6px}
.clock{display:flex;flex-direction:column;align-items:center;width:67px;margin:3px 0 0 11px;line-height:17px;letter-spacing:-.35px;flex:none}
.peek{width:14px;height:39px;margin-left:auto;border:1px solid #4a5f78;background:linear-gradient(150deg,#a9bacd,#6e849d 50%,#8094ad)}

.share{position:absolute;left:383px;top:676px;width:600px;height:46px;background:#fff;border:1px solid #000;border-bottom-width:3px;display:flex;align-items:center;color:#3a3d42}
.grip{width:6px;height:11px;border-left:2px solid #ccc;border-right:2px solid #ccc;margin-left:10px}
.t-share{width:391px;margin-left:10px;letter-spacing:-.09px}
.stop{width:121px;height:32px;border-radius:3px;background:#1f76e8;color:#fff;font-weight:700;display:grid;place-items:center;letter-spacing:-.45px}
.hide{color:#1f6fe0;margin-left:10px;letter-spacing:-.1px}
```
